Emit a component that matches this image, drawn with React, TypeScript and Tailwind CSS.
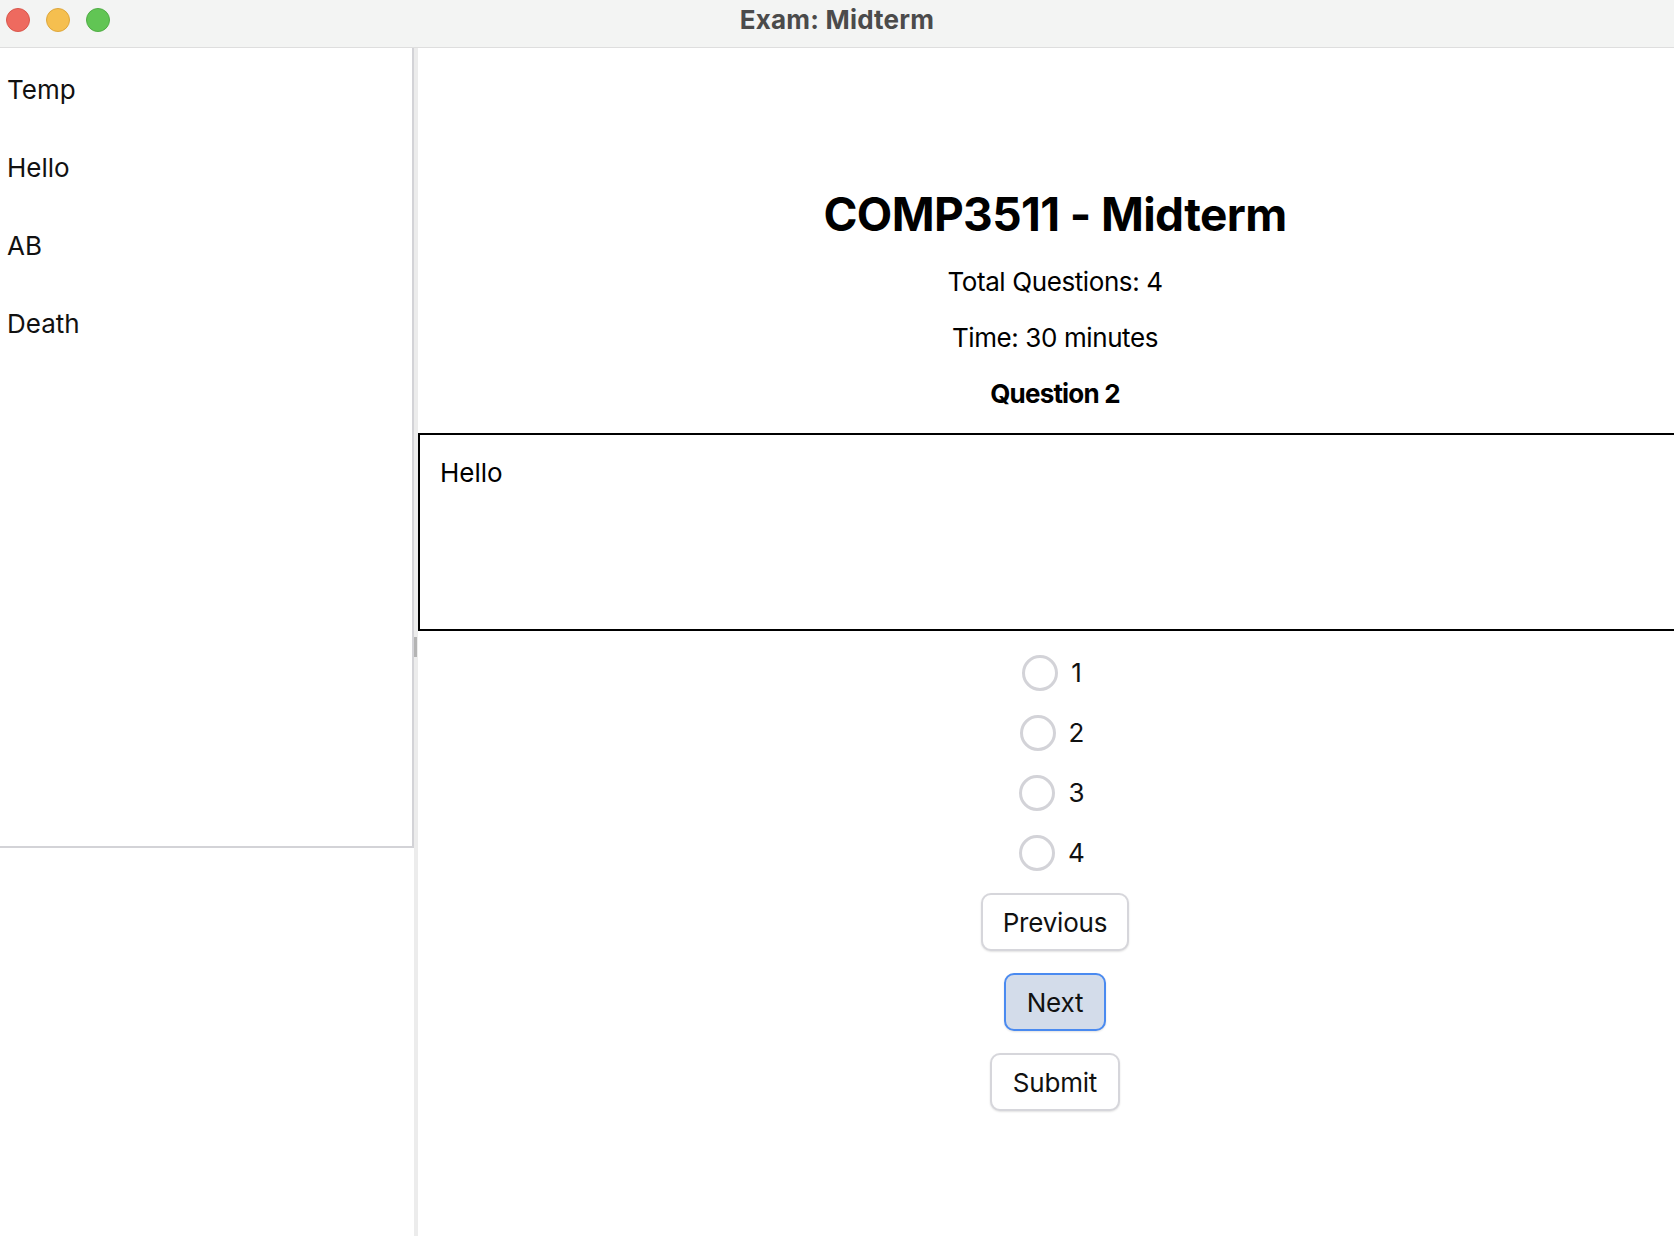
import React, { useState } from 'react'

const topics = ['Temp', 'Hello', 'AB', 'Death']
const options = ['1', '2', '3', '4']

function TrafficLights() {
  return (
    <div className="flex items-center gap-[16px] pl-[6px] pt-[8px]">
      <span className="size-[24px] rounded-full bg-[#ee6a5f] border border-[#d9574c]" />
      <span className="size-[24px] rounded-full bg-[#f5bf4f] border border-[#dea73c]" />
      <span className="size-[24px] rounded-full bg-[#61c554] border border-[#50ad45]" />
    </div>
  )
}

function Radio({ label, checked, onClick }: { label: string; checked: boolean; onClick: () => void }) {
  return (
    <label className="flex h-[36px] items-center gap-[13px] cursor-pointer" onClick={onClick}>
      <span
        className={`size-[36px] rounded-full border-[3px] bg-white ${
          checked ? 'border-[#3f82f0]' : 'border-[#d3d3d8]'
        }`}
      />
      <span className="text-[26px] leading-[32px] text-[#111]">{label}</span>
    </label>
  )
}

export default function App() {
  const [answer, setAnswer] = useState<string | null>(null)

  return (
    <div className="w-[1674px] h-[1236px] flex flex-col overflow-hidden bg-white font-['Inter','Noto_Sans',sans-serif] text-black">
      {/* title bar */}
      <div className="h-[48px] shrink-0 grid grid-cols-[1fr_auto_1fr] items-start bg-[#f3f4f3] border-b border-[#dedede]">
        <TrafficLights />
        <div className="pt-[5px] text-[26px] leading-[30px] font-bold tracking-[0.2px] text-[#4b4b4b]">
          Exam: Midterm
        </div>
        <div />
      </div>

      <div className="flex flex-1 min-h-0">
        {/* left pane */}
        <div className="w-[414px] shrink-0 flex flex-col">
          <div className="h-[800px] border-r-2 border-b-2 border-[#d3d3d7] pt-[2px]">
            {topics.map((t) => (
              <div key={t} className="h-[78px] flex items-center pl-[7px] text-[26px] text-[#111]">
                {t}
              </div>
            ))}
          </div>
        </div>

        {/* split divider */}
        <div className="w-[4px] shrink-0 bg-[#ececec] flex flex-col">
          <div className="h-[589px]" />
          <div className="h-[20px] w-[3px] bg-[#b4b4b4]" />
        </div>

        {/* main */}
        <div className="flex-1 min-w-0 overflow-hidden">
          <div className="w-[1274px] flex flex-col items-center">
            <h1 className="mt-[139px] text-[46px] leading-[54px] font-bold tracking-[-0.6px]">
              COMP3511 - Midterm
            </h1>
            <p className="mt-[25px] text-[26px] leading-[32px] tracking-[-0.4px]">Total Questions: 4</p>
            <p className="mt-[24px] text-[26px] leading-[32px] tracking-[-0.4px]">Time: 30 minutes</p>
            <p className="mt-[24px] text-[26px] leading-[32px] font-bold tracking-[-0.8px]">Question 2</p>

            <div className="mt-[23px] w-full h-[198px] border-2 border-black px-[20px] pt-[22px] text-[26px] leading-[32px]">
              Hello
            </div>

            <div className="mt-[24px] mr-[6px] flex flex-col items-center gap-[24px]">
              {options.map((o) => (
                <Radio key={o} label={o} checked={answer === o} onClick={() => setAnswer(o)} />
              ))}
            </div>

            <div className="mt-[22px] flex flex-col items-center gap-[22px]">
              <button className="h-[58px] px-[20px] rounded-[10px] border-2 border-[#d6d6db] bg-white text-[26px] tracking-[-0.2px] text-[#111] shadow-[0_1px_2px_rgba(0,0,0,0.12)]">
                Previous
              </button>
              <button className="h-[58px] px-[21px] rounded-[10px] border-2 border-[#4a8af0] bg-[#d3dcea] text-[26px] tracking-[-0.2px] text-[#111] shadow-[0_1px_2px_rgba(0,0,0,0.12)]">
                Next
              </button>
              <button className="h-[58px] px-[21px] rounded-[10px] border-2 border-[#d6d6db] bg-white text-[26px] tracking-[-0.2px] text-[#111] shadow-[0_1px_2px_rgba(0,0,0,0.12)]">
                Submit
              </button>
            </div>
          </div>
        </div>
      </div>
    </div>
  )
}
